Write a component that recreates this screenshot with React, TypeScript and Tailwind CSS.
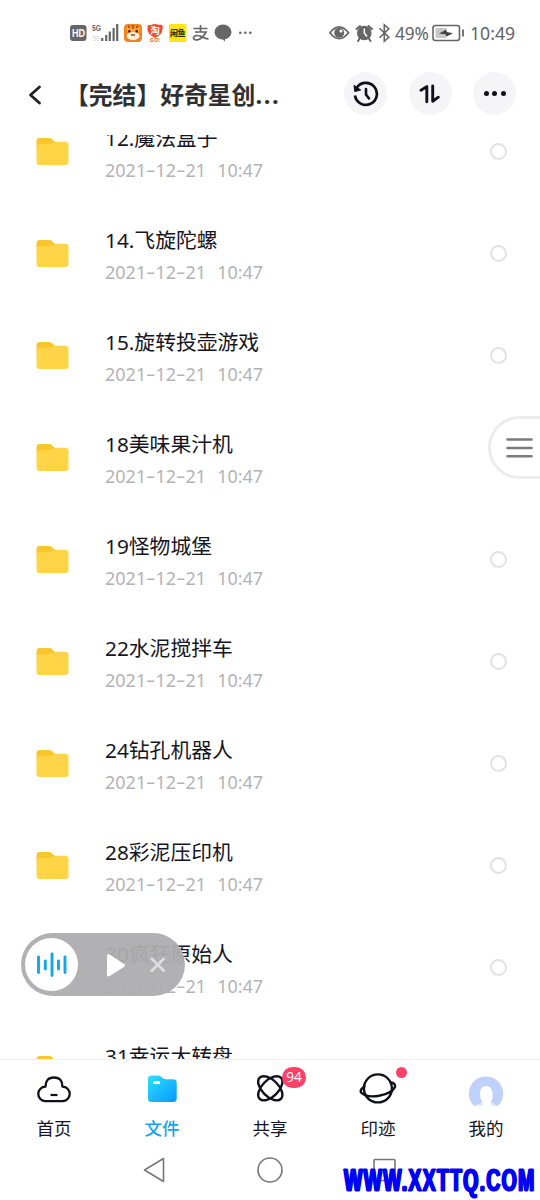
import React from "react";

const FONT = "font-['Noto_Sans','Noto_Sans_CJK_SC',sans-serif]";

const files = [
  "12.魔法盒子",
  "14.飞旋陀螺",
  "15.旋转投壶游戏",
  "18美味果汁机",
  "19怪物城堡",
  "22水泥搅拌车",
  "24钻孔机器人",
  "28彩泥压印机",
  "30疯狂原始人",
  "31幸运大转盘",
];

function Folder() {
  return (
    <svg width="33" height="29" viewBox="0 0 33 29" className="shrink-0">
      <path d="M0.5 4Q0.5 1 3.5 1H13Q15 1 16.3 2.4L19 5V10H0.5Z" fill="#fac62f" />
      <path d="M0.5 9Q0.5 7.6 2.5 7.4L14 7Q16 6.6 17.5 5.3L18.4 4.7H29.5Q32.5 4.7 32.5 7.7V25Q32.5 28 29.5 28H3.5Q0.5 28 0.5 25Z" fill="#ffd547" />
    </svg>
  );
}

function Dash() {
  return <span className="inline-block w-[9.4px] scale-x-125 text-center font-['Inter']">-</span>;
}

function FileRow({ name }: { name: string }) {
  return (
    <div className="flex h-[102px] shrink-0 items-center pl-9 pr-[33px]">
      <Folder />
      <div className="ml-[36px] flex flex-1 flex-col pt-[5px]">
        <div className="h-8 whitespace-nowrap text-[20.8px] leading-8 text-[#15151f]">{name}</div>
        <div className="h-8 whitespace-nowrap text-[18px] leading-8 text-[#b3b3b7]">
          2021<Dash />12<Dash />21<span className="ml-[11px]">10:47</span>
        </div>
      </div>
      <div className="h-[17px] w-[17px] rounded-full border-2 border-[#e2e2e4]" />
    </div>
  );
}

function StatusBar() {
  return (
    <div className="flex h-[66px] shrink-0 items-center text-[#646464]">
      <svg width="200" height="30" viewBox="60 18 200 30" className="ml-[60px] shrink-0">
        <rect x="70" y="25" width="16.5" height="16" rx="3" fill="#666" />
        <text x="72" y="37.3" fontSize="11" fontWeight="700" fill="#fff" fontFamily="Liberation Sans" textLength="13" lengthAdjust="spacingAndGlyphs">HD</text>
        <text x="92" y="31" fontSize="9.5" fontWeight="700" fill="#666" fontFamily="Liberation Sans" textLength="9" lengthAdjust="spacingAndGlyphs">5G</text>
        <text x="93" y="41" fontSize="7" fill="#ccc" fontFamily="Liberation Sans" textLength="7" lengthAdjust="spacingAndGlyphs">5G</text>
        <path d="M102.2 38V41M106.2 35V41M109.8 31.5V41M113.6 28V41M117.2 24V41" stroke="#666" strokeWidth="2.2" />
        <rect x="124" y="24" width="18" height="18" rx="4" fill="#f58220" />
        <path d="M126 27l4-1 3 2 3-2 4 1-1 5H127z" fill="#ffa53c" />
        <path d="M128 26l2 2M133 25v4M138 26l-2 2" stroke="#8a3b00" strokeWidth="1.2" />
        <ellipse cx="133" cy="36" rx="6.5" ry="4" fill="#fff0dc" />
        <circle cx="129.3" cy="31.2" r="1.2" fill="#421d05" /><circle cx="136.7" cy="31.2" r="1.2" fill="#421d05" />
        <path d="M131 35h4" stroke="#a3461b" strokeWidth="1.5" />
        <path d="M147.5 29Q147 24 151 25Q155 23 159 25Q164 24 162.5 29Q163 34 155 38Q147 34 147.5 29Z" fill="#e9512b" />
        <text x="155" y="34" fontSize="9.5" fontWeight="700" textAnchor="middle" fill="#fff" fontFamily="Noto Sans CJK SC">淘</text>
        <text x="150" y="42" fontSize="5" fontWeight="700" fill="#e9512b" fontFamily="Liberation Sans" textLength="10">GO!</text>
        <rect x="169" y="24" width="17.5" height="18" rx="1.5" fill="#ffe313" />
        <text x="170" y="36" fontSize="8" fontWeight="900" fill="#37330a" fontFamily="Noto Sans CJK SC" textLength="15.5">闲鱼</text>
        <path d="M193.5 28.5H207.5M200.5 25V32M195 32H206Q203 38 198 39.8Q193 40.5 193.5 37.5Q195 34.5 200 36Q205 38.5 208.5 39.2" fill="none" stroke="#666" strokeWidth="1.7" />
        <ellipse cx="223" cy="32" rx="8.5" ry="7.5" fill="#666" />
        <path d="M220 37L225 41.5V37Z" fill="#666" />
        <circle cx="240.3" cy="32.7" r="1.3" fill="#666" /><circle cx="245.3" cy="32.7" r="1.3" fill="#666" /><circle cx="250.3" cy="32.7" r="1.3" fill="#666" />
      </svg>
      <svg width="66" height="30" viewBox="326 18 66 30" className="ml-[66px] shrink-0">
        <path d="M330 32.7Q339.2 21 348.5 32.7Q339.2 44.5 330 32.7Z" fill="none" stroke="#666" strokeWidth="1.8" />
        <circle cx="339.2" cy="32.7" r="5" fill="#666" /><circle cx="341" cy="31" r="1.6" fill="#fff" />
        <circle cx="364.3" cy="33" r="7.3" fill="#666" />
        <path d="M356.5 29L360 26M372 29L368.5 26M359.5 38.5L358 41M369 38.5L370.5 41" stroke="#666" strokeWidth="2" strokeLinecap="round" />
        <path d="M364.3 28.5V33L367 36.5" fill="none" stroke="#fff" strokeWidth="1.5" />
        <path d="M379.5 28.2L388.8 37.3L384.3 41.3V24.7L388.8 28.7L379.5 37.8" fill="none" stroke="#666" strokeWidth="1.6" />
      </svg>
      <div className="ml-[3px] w-[36px] whitespace-nowrap text-[18px] tracking-[-0.2px]"><span className="inline-block origin-left scale-x-[0.96]">49%</span></div>
      <svg width="34" height="20" viewBox="431 23 34 20" className="shrink-0">
        <rect x="433" y="25.5" width="26.500" height="15" rx="2.500" fill="none" stroke="#666" strokeWidth="1.6" />
        <rect x="435.500" y="28" width="11" height="10" fill="#c8c8c8" />
        <path d="M439 33.500L446 29.700L447 32L453 33.200L446.500 36.500L445.400 34.200Z" fill="#444" />
        <path d="M463 29.500V36.500" stroke="#666" strokeWidth="1.8" />
      </svg>
      <div className="ml-[5px] whitespace-nowrap text-[17.7px]">10:49</div>
    </div>
  );
}

function Header() {
  return (
    <div className="flex h-[69px] shrink-0 items-start pt-[6px]">
      <svg width="16" height="22" viewBox="0 0 16 22" className="ml-[27px] mt-3">
        <path d="M12.5 3L3.5 11L12.5 19" fill="none" stroke="#222" strokeWidth="2.8" strokeLinecap="round" strokeLinejoin="round" />
      </svg>
      <div className="ml-[22px] w-[279px] whitespace-nowrap text-[23.8px] font-bold leading-[47px] text-[#303033]">
        【完结】好奇星创<span className="tracking-[1.6px]">...</span>
      </div>
      <div className="flex gap-[21.5px]">
        <div className="flex h-[43px] w-[43px] items-center justify-center rounded-full bg-[#f5f5f7]">
          <svg width="26" height="26" viewBox="0 0 26 26">
            <path d="M3.4 7.3A11 11 0 1 1 2 14.5" fill="none" stroke="#10101a" strokeWidth="2.7" />
            <path d="M1 4.3L1.8 10.6L7.7 9Z" fill="#10101a" stroke="#10101a" strokeLinejoin="round" />
            <path d="M13 8V13.5L16 17.5" fill="none" stroke="#10101a" strokeWidth="2.6" strokeLinecap="round" />
          </svg>
        </div>
        <div className="flex h-[43px] w-[43px] items-center justify-center rounded-full bg-[#f5f5f7]">
          <svg width="22" height="20" viewBox="0 0 22 20">
            <path d="M2 6.3L7.8 2.6V17.8M13.700 2V17.3L19.3 13.2" fill="none" stroke="#10101a" strokeWidth="2.9" strokeLinecap="round" strokeLinejoin="round" />
          </svg>
        </div>
        <div className="flex h-[43px] w-[43px] items-center justify-center gap-[3.5px] rounded-full bg-[#f5f5f7]">
          <i className="h-[5px] w-[5px] rounded-full bg-[#10101a]" />
          <i className="h-[5px] w-[5px] rounded-full bg-[#10101a]" />
          <i className="h-[5px] w-[5px] rounded-full bg-[#10101a]" />
        </div>
      </div>
    </div>
  );
}

function Tab({ label, active, children }: { label: string; active?: boolean; children: React.ReactNode }) {
  return (
    <div className={active ? "relative flex w-[108px] flex-col items-center text-[#12a5ee] font-medium" : "relative flex w-[108px] flex-col items-center text-[#15151f]"}>
      <div className="h-[53px] w-[54px]">{children}</div>
      <div className="text-[17.5px] leading-[30px]">{label}</div>
    </div>
  );
}

function TabBar() {
  return (
    <div className="flex h-[89px] shrink-0 border-t border-[#efeff1] bg-white">
      <Tab label="首页">
        <svg width="54" height="54" viewBox="27 1060 54 54">
          <path d="M45.5 1101.2A6.8 6.8 0 0 1 45.6 1086.6Q45.5 1077.5 54 1077.5Q62.5 1077.5 62.4 1086.6A6.8 6.8 0 0 1 62.5 1101.2Z" fill="none" stroke="#10101a" strokeWidth="2.3" strokeLinejoin="round" />
          <path d="M50.5 1095H57.5" stroke="#10101a" strokeWidth="2.2" />
        </svg>
      </Tab>
      <Tab label="文件" active>
        <svg width="54" height="54" viewBox="135 1060 54 54">
          <defs>
            <linearGradient id="blue" x1="0" y1="0" x2="1" y2="1">
              <stop offset="0" stopColor="#2de0ff" /><stop offset="1" stopColor="#0a98fa" />
            </linearGradient>
          </defs>
          <path d="M148 1079Q148 1075.5 151.5 1075.5H158Q160.5 1075.5 162 1077.5Q163.5 1079.3 166 1079.3H173Q176.7 1079.3 176.7 1083V1098.5Q176.7 1102 173 1102H151.5Q148 1102 148 1098.5Z" fill="url(#blue)" />
          <rect x="153" y="1081.3" width="7" height="2.7" rx="0.6" fill="#fff" />
        </svg>
      </Tab>
      <Tab label="共享">
        <svg width="54" height="54" viewBox="243 1060 54 54">
          <g fill="none" stroke="#10101a" strokeWidth="2.4">
            <ellipse cx="270.3" cy="1088.3" rx="15" ry="8.2" transform="rotate(45 270.3 1088.3)" />
            <ellipse cx="270.3" cy="1088.3" rx="15" ry="8.2" transform="rotate(-45 270.3 1088.3)" />
          </g>
        </svg>
        <div className="absolute left-[66px] top-[7px] flex h-[21px] w-[24px] items-center justify-center rounded-full bg-[#fb4168] text-[13.5px] leading-none text-white">94</div>
      </Tab>
      <Tab label="印迹">
        <svg width="54" height="54" viewBox="351 1060 54 54">
          <g fill="none" stroke="#10101a" strokeWidth="2.4">
            <circle cx="377.9" cy="1088.4" r="14" />
            <path d="M364.5 1086.5Q359.5 1090 361 1092.5Q366 1097.8 379 1095.8Q392 1093.5 395 1087Q395.8 1083.2 390.5 1082.3" strokeLinecap="round" />
          </g>
        </svg>
        <div className="absolute left-[72px] top-[7px] h-[11px] w-[11px] rounded-full bg-[#fb4168]" />
      </Tab>
      <Tab label="我的">
        <svg width="54" height="54" viewBox="459 1060 54 54">
          <path d="M474 1106A17.2 17.2 0 1 1 498 1106L491 1102.5Q493 1098 492.5 1093Q491.5 1086 486.3 1086Q480.5 1086 480 1093Q480 1099 482.5 1102.5Z" fill="#bfd1fb" />
          <path d="M474 1106L482.5 1102.5V1105L478 1106ZM498 1106L491 1102.5V1105L494 1106Z" fill="#dfe7fc" />
        </svg>
      </Tab>
    </div>
  );
}

function Player() {
  return (
    <div className="absolute left-[21px] top-[933px] flex h-[63px] w-[164px] items-center rounded-full bg-[#adadaf]/95 pl-1">
      <div className="flex h-[53px] w-[53px] items-center justify-center rounded-full bg-white">
        <svg width="32" height="26" viewBox="0 0 32 26">
          <path d="M2.5 5V20.5M9.3 9V17M16 2V23.5M22.5 9V17M29 5V20.5" stroke="#16a5e8" strokeWidth="2.9" strokeLinecap="round" />
        </svg>
      </div>
      <svg width="20" height="24" viewBox="0 0 20 24" className="ml-[28px]">
        <path d="M2.5 2.5L17.5 12.5L2.5 22Z" fill="#fff" stroke="#fff" strokeWidth="3" strokeLinejoin="round" />
      </svg>
      <svg width="18" height="18" viewBox="0 0 18 18" className="ml-[23px]">
        <path d="M2 2L15.5 15.5M15.5 2L2 15.5" stroke="#dedee0" strokeWidth="2.6" />
      </svg>
    </div>
  );
}

export default function App() {
  return (
    <div className={`relative flex h-[1200px] w-[540px] flex-col overflow-hidden bg-white ${FONT}`} lang="zh-CN">
      <StatusBar />
      <Header />
      <div className="flex min-h-0 flex-1 flex-col overflow-hidden">
        <div className="-mt-[35px] flex flex-col">
          {files.map((name) => <FileRow key={name} name={name} />)}
        </div>
      </div>
      <TabBar />
      <div className="flex h-[52px] shrink-0 items-start bg-white">
        <svg width="540" height="44" viewBox="0 1148 540 44" fill="none" stroke="#777" strokeWidth="1.6">
          <path d="M163.5 1158.5L144.5 1170L163.5 1181.5Z" strokeLinejoin="round" />
          <circle cx="270" cy="1170" r="12" />
          <rect x="374" y="1159.5" width="21" height="21" rx="1" />
        </svg>
      </div>
      <div className="absolute left-[488px] top-[416px] flex h-[63px] w-[70px] items-center rounded-l-full border-[3px] border-[#ececec] bg-white pl-[15px]">
        <svg width="27" height="22" viewBox="0 0 27 22">
          <path d="M1.5 2.5H25.5M1.5 11H25.5M1.5 19.3H25.5" stroke="#7c7c7c" strokeWidth="2.6" strokeLinecap="round" />
        </svg>
      </div>
      <Player />
      <div className="absolute left-[344px] top-[1161px] origin-left scale-x-[0.605] whitespace-nowrap font-['Liberation_Sans'] text-[32px] font-bold leading-[39px] tracking-[2.2px] text-[#0000f5] [-webkit-text-stroke:1.2px_#0000f5] [text-shadow:1.5px_0_#0000f5,-1.5px_0_#0000f5]">
        WWW.XXTTQ.COM
      </div>
    </div>
  );
}
